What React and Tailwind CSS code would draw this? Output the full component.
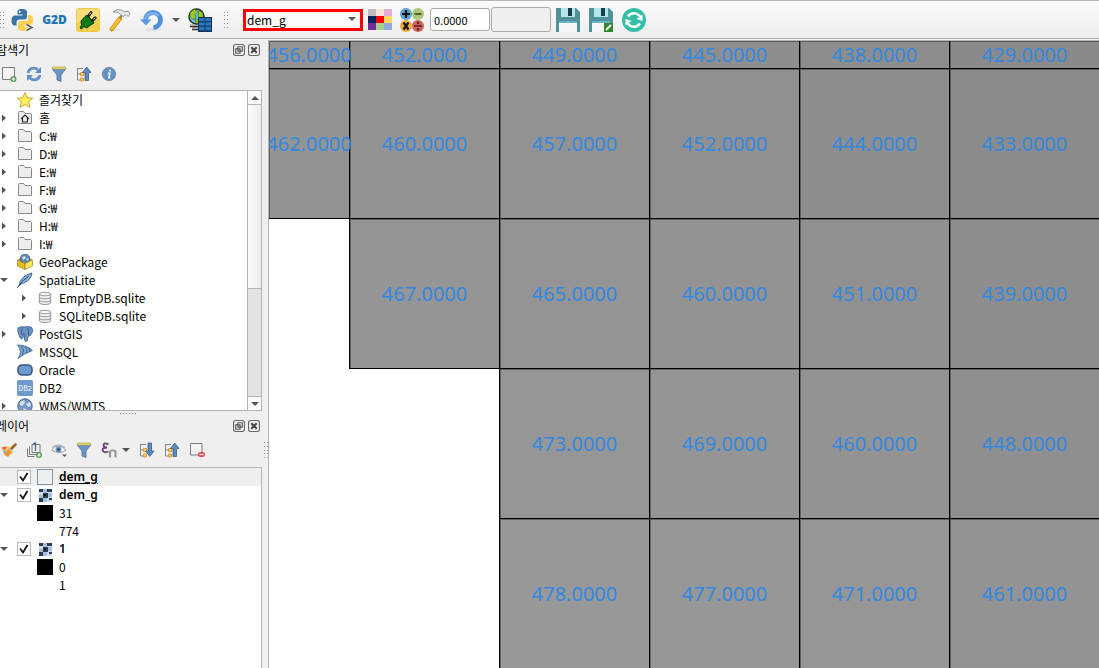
import React from "react";

/* ---------- toolbar icons ---------- */
const PythonIcon = () => (
  <svg viewBox="0 0 24 24" className="size-6">
    <path d="M11 1c-4 0-4.500 1.500-4.500 3v2.500h5v1H4c-2 0-3.500 1.500-3.500 5s1.500 5 3 5h2v-3c0-1.800 1.500-3 3-3h5c1.500 0 2.500-1.200 2.500-2.700V4c0-2-1.500-3-5-3z" fill="#3a73a6" />
    <circle cx="8.700" cy="3.800" r="1" fill="#fff" />
    <path d="M17 7h2c2 0 3 2 3 5 0 3.500-1 5-3 5h-6.500v1H17v2c0 1.800-1.500 3-5 3s-5-1-5-3v-4c0-1.800 1-3 3-3h4.500c1.500 0 2.500-1.200 2.500-2.700z" fill="#fcd04e" />
    <path d="M15 17l6 2.500-6 3" fill="none" stroke="#fff" strokeWidth="3" />
    <path d="M15.500 16.500l5.500 3-5.500 3" fill="none" stroke="#555" strokeWidth="1.500" />
  </svg>
);
const PlugIcon = () => (
  <svg viewBox="0 0 24 24" className="size-6">
    <rect x="0.500" y="0.500" width="23" height="23" rx="2.500" fill="#f2d04e" stroke="#ecc94a" />
    <path d="M1 1h22v10Q12 9 1 15z" fill="#f6dc7a" />
    <path d="M4 20l1.500-3-.500-4 4-4.500 2-1.500 2 2 4 4 1 2-4 2.500-3 2.500-3-1.500-2.500 2.500z" fill="#0b7a16" stroke="#123b12" strokeWidth="1" />
    <path d="M12.500 8l2.500-3.500M16.500 12.500l2.700-2.700" stroke="#222" strokeWidth="3" strokeLinecap="round" />
    <path d="M13.500 6.500l1.300-2M17.500 11.500l1.800-1.800" stroke="#ddd" strokeWidth="1" />
  </svg>
);
const HammerIcon = () => (
  <svg viewBox="0 0 24 24" className="size-6">
    <path d="M3 22q8 2 10-1z" fill="#d8d8d8" />
    <path d="M14 7L11 12" stroke="#8a8a8a" strokeWidth="2.500" />
    <path d="M11.500 11L4 21" stroke="#c78b10" strokeWidth="4.500" strokeLinecap="round" />
    <path d="M11 11.500L4 20.500" stroke="#f9bd2c" strokeWidth="3" strokeLinecap="round" />
    <path d="M5 4q4-3.500 8-2l4 2 3-1 2 3-2 2.500-2-2-3 2-3-3q-2-2-7-1.500z" fill="#e9ecec" stroke="#85898a" strokeWidth="0.900" />
  </svg>
);
const UndoIcon = () => (
  <svg viewBox="0 0 24 24" className="size-6">
    <ellipse cx="13" cy="21.500" rx="8" ry="1.800" fill="#dde1e8" />
    <path d="M5.500 12a7.500 7.500 0 1 1 8 7.500" fill="none" stroke="#4f8edb" strokeWidth="4.800" />
    <path d="M5.500 11a7.500 7.500 0 0 1 13-3" fill="none" stroke="#78b0ee" strokeWidth="3" />
    <path d="M0 11.500h11.500l-5.500 6z" fill="#5e9ae0" />
  </svg>
);
const GlobeServerIcon = () => (
  <svg viewBox="0 0 24 24" className="size-6">
    <circle cx="8.500" cy="8.500" r="7.500" fill="#69c6e8" stroke="#26331c" strokeWidth="1.500" />
    <path d="M2 5q2-3.500 5-3.500l3 2-3 3 1 3-3 2-3-3zM11 2.500l4 2.500v5l-3 1-2-3zM7 11l4 1-1 3.500H8z" fill="#9ccc22" stroke="#35541a" strokeWidth="0.600" />
    <path d="M2 18h8M4 21h7" stroke="#333" strokeWidth="2.500" />
    <path d="M2 17.500h8M4 20.500h7" stroke="#aaa" />
    <rect x="10.500" y="9.500" width="13" height="14" fill="#184b80" stroke="#16304e" />
    <path d="M11 11.500h12M11 16h12M11 20.500h12" stroke="#2b7cc6" strokeWidth="2.500" />
    <path d="M17 9v15" stroke="#153c68" strokeWidth="0.800" />
  </svg>
);
const PaletteIcon = () => (
  <svg viewBox="0 0 24 21" className="h-[21px] w-6" shapeRendering="crispEdges">
    {[
      ["#bfbfbf", "#fbe3d6", "#e2abd8"],
      ["#02215f", "#fe0000", "#fed65f"],
      ["#722d9c", "#a6cf8a", "#8faadc"],
    ].map((r, y) => r.map((c, x) => <rect key={c} x={x * 8} y={y * 7} width="8" height="7" fill={c} />))}
  </svg>
);
const CalcIcon = () => (
  <svg viewBox="0 0 24 24" className="size-6">
    <circle cx="6" cy="6" r="6" fill="#5ba3d0" />
    <circle cx="18" cy="6" r="6" fill="#adc978" />
    <circle cx="6" cy="18" r="6" fill="#f3ab3c" />
    <circle cx="18" cy="18" r="6" fill="#d2625e" />
    <path d="M2 6h8M6 2v8M3.500 14.500l5 7M8.500 14.500l-5 7" stroke="#111" strokeWidth="2.200" />
    <path d="M14.500 6h7" stroke="#47552c" strokeWidth="1.800" />
    <path d="M14 18h8" stroke="#552020" strokeWidth="1.500" />
    <circle cx="18" cy="14.800" r="1.200" fill="#552020" />
    <circle cx="18" cy="21.200" r="1.200" fill="#552020" />
  </svg>
);
const SaveIcon = ({ edit }) => (
  <svg viewBox="0 0 24 24" className="size-6">
    <path d="M0 0h20l4 4v20H0z" fill="#519199" />
    <path d="M5 0h14v9H5z" fill="#b3e5ea" />
    <path d="M12 0h4v8h-4z" fill="#173f49" />
    <path d="M3 13h18v3H3z" fill="#69b4c4" />
    <path d="M3 15h18v9H3z" fill="#f7f7f7" />
    {edit && <path d="M15 15h9v9h-9z" fill="#33862f" />}
    {edit && <path d="M17 22l5-5" stroke="#fff" strokeWidth="2" />}
  </svg>
);
const RefreshIcon = () => (
  <svg viewBox="0 0 24 24" className="size-6">
    <circle cx="12" cy="12" r="12" fill="#34bfa6" />
    <path d="M6 8.500a7.200 7.200 0 0 1 12.500 1M18 15.500a7.200 7.200 0 0 1-12.500-1" fill="none" stroke="#fff" strokeWidth="2.400" />
    <path d="M20.500 6.500v6.500l-6-2zM3.500 17.500V11l6 2z" fill="#fff" />
  </svg>
);

/* ---------- panel icons ---------- */
const S = ({ children, className = "size-4" }) => (
  <svg viewBox="0 0 16 16" className={className}>{children}</svg>
);
const AddLayer = () => (
  <S>
    <path d="M1.500 1.500h12v12h-12z" fill="#f2f2f2" stroke="#7d7d7d" />
    <circle cx="12.500" cy="13" r="3" fill="#5b9a61" />
    <path d="M10.800 13h3.400M12.500 11.300v3.400" stroke="#fff" strokeWidth="1.200" />
  </S>
);
const Reload = () => (
  <S>
    <path d="M2 7a5.800 5.800 0 0 1 10-3M14 9a5.800 5.800 0 0 1-10 3" fill="none" stroke="#6493c6" strokeWidth="2.800" />
    <path d="M15 1v6H9zM1 15V9h6z" fill="#5e8dc2" />
  </S>
);
const Funnel = () => (
  <S>
    <path d="M1 2.500h14L10 9v6.500l-4-1.500V9z" fill="#6b95c4" stroke="#486d98" strokeWidth="0.800" />
    <path d="M1.500 1h13v2h-13z" fill="#f5e34f" stroke="#a9a05c" strokeWidth="0.700" />
  </S>
);
const Tree = ({ down }) => (
  <S>
    <path d="M1.500 2v12h4M1.500 8h4M1 2.500h6" fill="none" stroke="#888" />
    <path d="M4.500 6.500h3v3h-3zM4.500 12h3v3h-3z" fill="#fbd06f" stroke="#e2992e" />
    <path d={down ? "M9 1h3.500v8H15l-4.200 5.500L6.500 9H9z" : "M9 14.500h3.500v-8H15l-4.200-5.500L6.500 6.500H9z"} fill="#5b8abd" stroke="#3c6187" strokeWidth="0.800" />
  </S>
);
const Info = () => (
  <S>
    <circle cx="8" cy="8" r="6.700" fill="#6492c6" stroke="#7f93a9" />
    <path d="M9 3.800v1.600M7 7.200h1.800l-1 4.500h1.500" fill="none" stroke="#fff" strokeWidth="1.600" />
  </S>
);
const Brush = () => (
  <S>
    <path d="M0.500 5.500l7-1.500 3.500 4-3 6-5-2z" fill="#f6d060" />
    <path d="M0.500 5.500l5-1-1.500 4z" fill="#ea5b50" />
    <path d="M1.500 8.500l4 1-1.500 3z" fill="#77a8e0" />
    <path d="M14.500 2.500L9.500 7.500" stroke="#9b6423" strokeWidth="2.500" strokeLinecap="round" />
    <path d="M7.500 6.500l4 3.500-4.500 5-4-2.500z" fill="#ee952f" />
    <path d="M7.500 6l4.500 4" stroke="#c9c9c9" strokeWidth="1.500" />
  </S>
);
const AddGroup = () => (
  <S>
    <path d="M1.500 6.500v8h7M3.500 4.500v8h8M6 2.500h8v8H6z" fill="none" stroke="#777" />
    <path d="M9.500 9V1q-2 0-2 2" fill="none" stroke="#476c94" strokeWidth="1.300" />
    <circle cx="13" cy="13" r="3" fill="#5b9a61" />
    <path d="M11.300 13h3.400M13 11.300v3.400" stroke="#fff" strokeWidth="1.200" />
  </S>
);
const Eye = () => (
  <S>
    <path d="M0.500 8Q7 0 15 8 8 13 0.500 8z" fill="#fff" stroke="#999" />
    <path d="M1 5.500Q7 0.500 14 5.500" fill="none" stroke="#aaa" />
    <circle cx="7.500" cy="7.500" r="3" fill="#6895ca" />
    <circle cx="7.500" cy="7.500" r="1.300" fill="#263f5d" />
    <path d="M11 12.500h5L13.500 15z" fill="#555" />
  </S>
);
const Expr = () => (
  <S>
    <path d="M7.500 2.500Q2.500 0 2.500 3.500q0 2 3.500 2-4.500 0-4.500 2.500 1 3.500 6 1.500" fill="none" stroke="#74427a" strokeWidth="1.800" />
    <path d="M9 15.500V10q0-1.500 1.500-1.500h2.500q1.500 0 1.500 1.500v5.500" fill="none" stroke="#999" strokeWidth="2.200" />
  </S>
);
const RemoveLayer = () => (
  <S>
    <path d="M1.500 1.500h11.500v11.500H1.500z" fill="#f2f2f2" stroke="#7d7d7d" />
    <rect x="9" y="10" width="7" height="5" rx="2.500" fill="#e4474d" />
    <path d="M10.500 12.500h4" stroke="#fff" strokeWidth="1.300" />
  </S>
);
const Star = () => (
  <S><path d="M8 0.500l2.300 5.200 5.400.500-4 3.700 1.200 5.400L8 12.500l-4.900 2.800 1.200-5.400-4-3.700 5.400-.500z" fill="#fbef5c" stroke="#c39d29" strokeWidth="0.900" /></S>
);
const Folder = ({ home }) => (
  <S>
    <path d="M1.500 2.500q0-1 1-1h4l1.500 2h5.500q1 0 1 1v9h-13z" fill="#ededed" stroke="#888" />
    {home && <path d="M4 9l4-4 4 4M5.500 8v4h5V8" fill="none" stroke="#222" strokeWidth="1.100" />}
  </S>
);
const GeoPackage = () => (
  <S>
    <path d="M0.500 5.500L8 2l7.500 3.500L8 9.500z" fill="#b99a1c" />
    <circle cx="8" cy="5" r="4.800" fill="#5f86b0" stroke="#375779" strokeWidth="0.800" />
    <path d="M5 3l3-1 1 2-3 2zM9 5l3-1-1 3z" fill="#d6e2ee" />
    <path d="M0.500 6L8 9.500v6L0.500 12z" fill="#e7bd19" stroke="#8d7416" strokeWidth="0.600" />
    <path d="M15.500 6L8 9.500v6l7.500-3.500z" fill="#fae65a" stroke="#8d7416" strokeWidth="0.600" />
  </S>
);
const Feather = () => (
  <S>
    <path d="M2 14Q3 4 15 1q-1 8-11 11z" fill="#8cb2de" stroke="#40658c" />
    <path d="M0.500 15.500Q4 9 12 4" fill="none" stroke="#345374" />
  </S>
);
const Db = () => (
  <S className="h-4 w-[14px]">
    <path d="M1.500 3.500v10c0 2.500 13 2.500 13 0v-10" fill="#f1f1f1" stroke="#888" />
    <ellipse cx="8" cy="3.500" rx="6.500" ry="2" fill="#f7f7f7" stroke="#888" />
    <path d="M1.500 7c0 2.500 13 2.500 13 0M1.500 10.500c0 2.500 13 2.500 13 0" fill="none" stroke="#888" />
  </S>
);
const Elephant = () => (
  <S>
    <path d="M1 2q3-2 6-1 4-1 7 0 3 2 1 6l-2 3h-2l-.500 4.500q-2 2-3 0V10q-2 1-2.500 3-2 0-3-4Q0 5 1 2z" fill="#6893c4" stroke="#3a5e86" strokeWidth="0.800" />
    <path d="M5 2q-1 4 0 7M10.500 2q2 3 1 7M7 7v3" fill="none" stroke="#345679" strokeWidth="0.900" />
  </S>
);
const Mssql = () => (
  <S>
    <path d="M0.500 1Q10 1 15.500 6.500 8 9 1 14.500 6 7 0.500 1z" fill="#7ba5d4" stroke="#41658d" strokeWidth="0.800" />
    <path d="M4.500 1.500q3.500 4 1 10M8.500 2.500q2.500 3 1 7M12 4q1.500 2 .500 4" fill="none" stroke="#41658d" />
  </S>
);
const Oracle = () => (
  <S><rect x="1" y="3" width="14" height="10" rx="4" fill="#6d9bd0" stroke="#385a80" strokeWidth="1.600" /></S>
);
const Wms = () => (
  <S>
    <circle cx="8" cy="8" r="7.200" fill="#7399c4" stroke="#42658c" />
    <path d="M3 4l4-2 1 3-3 3-2-1zM9 6l4-2 1 4-3 1zM6 10l3 1-1 3z" fill="#d4e2f0" />
  </S>
);
const Db2 = () => (
  <span className="flex size-4 items-center justify-center rounded-[2px] bg-[#6e9acb] text-[7px] leading-none text-white">DB2</span>
);
const Raster = () => (
  <svg viewBox="0 0 13 13" className="mx-px h-[13px] w-[14px]" shapeRendering="crispEdges">
    <path d="M0 0h13v13H0z" fill="#cfdcec" />
    <path d="M0 0h4v3H0zM8 0h5v3H8zM4 4h5v5H4zM0 9h4v4H0zM10 9h3v2h-3z" fill="#2c3d51" />
    <path d="M4 0h4v4H4zM9 4h4v4H9zM4 9h4v4H4zM0 6h4v3H0z" fill="#a6bfdc" />
    <path d="M5 5h2v2H5z" fill="#111" />
  </svg>
);

/* ---------- small parts ---------- */
const Caret = ({ dir }) => (
  <svg viewBox="0 0 8 8" className="size-2 shrink-0">
    <path
      d={dir === "right" ? "M2 0.500v7L6 4z" : dir === "up" ? "M0 6h8L4 2z" : "M0 2h8L4 6z"}
      fill="#555"
    />
  </svg>
);
const Grip = () => (
  <span className="flex h-4 w-1 flex-col justify-between">
    {[0, 1, 2, 3, 4].map((i) => (
      <span key={i} className="flex justify-between">
        <i className="size-px bg-[#999]" />
        <i className="size-px bg-[#999]" />
      </span>
    ))}
  </span>
);
const Tool = ({ label, children, className = "" }) => (
  <button type="button" aria-label={label} className={`flex shrink-0 items-center justify-center ${className}`}>
    {children}
  </button>
);
const PanelTitle = ({ title }) => (
  <div className="flex h-[19px] shrink-0 items-center justify-between pr-2">
    <h2 className="-ml-1 font-normal">{title}</h2>
    <div className="flex gap-[3px]">
      <Tool label="Float">
        <svg viewBox="0 0 11 11" className="size-3">
          <rect x="0.500" y="0.500" width="10" height="10" rx="2" fill="none" stroke="#666" />
          <path d="M4.500 2.500h4v4h-4zM2.500 4.500h4v4h-4z" fill="#eee" stroke="#555" />
        </svg>
      </Tool>
      <Tool label="Close">
        <svg viewBox="0 0 11 11" className="size-3">
          <rect x="0.500" y="0.500" width="10" height="10" rx="2" fill="none" stroke="#666" />
          <path d="M3 3l5 5M8 3L3 8" stroke="#444" strokeWidth="2" />
        </svg>
      </Tool>
    </div>
  </div>
);

const browser = [
  ["즐겨찾기", Star, ""],
  ["홈", () => <Folder home />, "right"],
  ...["C", "D", "E", "F", "G", "H", "I"].map((d) => [`${d}:₩`, Folder, "right"]),
  ["GeoPackage", GeoPackage, ""],
  ["SpatiaLite", Feather, "down"],
  ["EmptyDB.sqlite", Db, "right", true],
  ["SQLiteDB.sqlite", Db, "right", true],
  ["PostGIS", Elephant, "right"],
  ["MSSQL", Mssql, ""],
  ["Oracle", Oracle, ""],
  ["DB2", Db2, ""],
  ["WMS/WMTS", Wms, "right"],
];

const Layer = ({ id, name, active, children }) => (
  <li className={`flex h-[18px] items-center ${active ? "bg-[#efefef]" : ""}`}>
    <span className="flex w-[17px] shrink-0">{!active && <Caret dir="down" />}</span>
    <span className="relative mr-[6px] size-[14px] shrink-0">
      <input id={id} type="checkbox" defaultChecked className="peer block size-[14px] appearance-none border border-[#b9b9b9] bg-white" />
      <svg viewBox="0 0 14 14" className="pointer-events-none absolute inset-0 hidden size-[14px] peer-checked:block">
        <path d="M3 6.500l3 4 4.500-7.500" fill="none" stroke="#111" strokeWidth="1.800" />
      </svg>
    </span>
    {children}
    <label htmlFor={id} className={`ml-[6px] font-['Noto_Sans','Noto_Sans_CJK_KR',sans-serif] font-semibold ${active ? "underline underline-offset-2" : ""}`}>{name}</label>
  </li>
);
const Legend = ({ value, swatch }) => (
  <li className="flex h-[18px] items-center pl-[37px]">
    <span className={`mr-[6px] size-4 ${swatch ? "bg-black" : ""}`} />
    {value}
  </li>
);

/* ---------- map ---------- */
const rows = [
  [456, 452, 449, 445, 438, 429],
  [462, 460, 457, 452, 444, 433],
  [null, 467, 465, 460, 451, 439],
  [null, null, 473, 469, 460, 448],
  [null, null, 478, 477, 471, 461],
];
const shade = (v) => {
  const g = Math.round(138 + (v - 429) * 0.28);
  return `rgb(${g},${g},${g})`;
};
const Cell = ({ value, edge }) =>
  value === null ? (
    <div className={edge ? "border-r border-black" : ""} />
  ) : (
    <div
      className="flex items-center justify-center border-r border-b border-black shadow-[inset_1px_1px_0_rgba(0,0,0,0.35)]"
      style={{ backgroundColor: shade(value) }}
    >
      <span className="relative z-10 font-['Noto_Sans',sans-serif] text-xl leading-6 whitespace-nowrap text-[#3388e0]">{value}.0000</span>
    </div>
  );

export default function App() {
  return (
    <div className="flex h-screen flex-col overflow-hidden bg-[#efefef] font-['Noto_Sans_CJK_KR','Noto_Sans',sans-serif] text-xs leading-4 text-black">
      <header className="flex h-[39px] shrink-0 items-center border-t border-b border-[#b4b4b4] bg-linear-to-b from-[#fbfbfb] to-[#ededed]">
        <Grip />
        <Tool label="Python" className="ml-[7px]"><PythonIcon /></Tool>
        <Tool label="G2D" className="ml-1.5 w-[27px] font-['Open_Sans','Noto_Sans',sans-serif] text-xs font-extrabold text-[#1f74b5]">G2D</Tool>
        <Tool label="Plugins" className="ml-2"><PlugIcon /></Tool>
        <Tool label="Build" className="ml-2"><HammerIcon /></Tool>
        <Tool label="Undo" className="ml-2"><UndoIcon /></Tool>
        <Tool label="Undo options" className="ml-2"><Caret dir="down" /></Tool>
        <Tool label="Web services" className="ml-2"><GlobeServerIcon /></Tool>
        <span className="ml-3"><Grip /></span>
        <label className="relative ml-[15px] flex">
          <select aria-label="Layer" className="h-[22px] w-[120px] appearance-none border-3 border-[#f00] bg-[#fafafa] pl-px text-xs leading-4">
            <option>dem_g</option>
          </select>
          <span className="pointer-events-none absolute top-[6px] right-[7px]"><Caret dir="down" /></span>
        </label>
        <Tool label="Palette" className="ml-[5px]"><PaletteIcon /></Tool>
        <Tool label="Raster calculator" className="ml-2"><CalcIcon /></Tool>
        <input aria-label="Value" defaultValue="0.0000" className="ml-[6px] h-[23px] w-[60px] rounded-[3px] border border-[#aaa] bg-white px-[3px] text-[11px]" />
        <input aria-label="Result" readOnly className="ml-px h-[25px] w-[60px] rounded-[3px] border border-[#aaa] bg-[#efefef] px-1" />
        <Tool label="Save" className="ml-[5px]"><SaveIcon /></Tool>
        <Tool label="Save edits" className="ml-[9px]"><SaveIcon edit /></Tool>
        <Tool label="Refresh" className="ml-[9px]"><RefreshIcon /></Tool>
      </header>

      <div className="flex min-h-0 flex-1 pt-px">
        <aside className="flex w-[268px] shrink-0 flex-col overflow-hidden">
          <section className="shrink-0">
            <PanelTitle title="탐색기" />
            <div className="flex h-[31px] items-center gap-[9px] pl-px pb-0.5">
              <Tool label="Add layer"><AddLayer /></Tool>
              <Tool label="Reload"><Reload /></Tool>
              <Tool label="Filter"><Funnel /></Tool>
              <Tool label="Collapse all"><Tree /></Tool>
              <Tool label="Properties"><Info /></Tool>
            </div>
            <div className="mr-[6px] flex h-[321px] border-y border-r border-[#b4b4b4] bg-white">
              <ul className="flex-1 overflow-hidden">
                {browser.map(([name, Icon, dir, child]) => (
                  <li key={name} className={`flex h-[18px] items-center ${child ? "pl-5" : ""}`}>
                    <span className="flex w-[17px] shrink-0">{dir && <Caret dir={dir} />}</span>
                    <span className="mr-[6px] flex w-4 shrink-0 justify-center"><Icon /></span>
                    {name}
                  </li>
                ))}
              </ul>
              <div className="flex w-[14px] flex-col border-l border-[#b4b4b4] bg-[#e3e3e3]">
                <Tool label="Scroll up" className="h-[14px] border-b border-[#b4b4b4] bg-[#fafafa]"><Caret dir="up" /></Tool>
                <span className="h-[184px] border-b border-[#b4b4b4] bg-linear-to-r from-[#fcfcfc] to-[#ececec]" />
                <span className="flex-1" />
                <Tool label="Scroll down" className="h-[14px] border-t border-[#b4b4b4] bg-[#fafafa]"><Caret dir="down" /></Tool>
              </div>
            </div>
          </section>

          <div className="flex h-[5px] shrink-0 items-center justify-center gap-0.5 pr-3">
            {[0, 1, 2, 3, 4, 5].map((i) => <i key={i} className="size-px bg-[#999]" />)}
          </div>

          <section className="flex min-h-0 flex-1 flex-col">
            <PanelTitle title="레이어" />
            <div className="flex h-8 shrink-0 items-center gap-[9px] pl-px pb-0.5">
              <Tool label="Layer styling"><Brush /></Tool>
              <Tool label="Add group"><AddGroup /></Tool>
              <Tool label="Map themes"><Eye /></Tool>
              <Tool label="Filter legend"><Funnel /></Tool>
              <Tool label="Filter by expression"><Expr /></Tool>
              <Tool label="Expression options" className="-ml-1"><Caret dir="down" /></Tool>
              <Tool label="Expand all"><Tree down /></Tool>
              <Tool label="Collapse all"><Tree /></Tool>
              <Tool label="Remove layer"><RemoveLayer /></Tool>
              <span className="ml-auto"><Grip /></span>
            </div>
            <ul className="mr-[6px] flex-1 border-t border-r border-[#b4b4b4] bg-white">
              <Layer id="layer-vector" name="dem_g" active>
                <span className="size-4 border border-[#8194a8] bg-[#eef0f0]" />
              </Layer>
              <Layer id="layer-dem" name="dem_g"><Raster /></Layer>
              <Legend value="31" swatch />
              <Legend value="774" />
              <Layer id="layer-one" name="1"><Raster /></Layer>
              <Legend value="0" swatch />
              <Legend value="1" />
            </ul>
          </section>
        </aside>

        <main className="min-w-0 flex-1 overflow-hidden border-t border-l border-[#b4b4b4] bg-white">
          <div className="grid grid-cols-[81px_repeat(5,150px)] grid-rows-[28px_repeat(4,150px)]">
            {rows.map((r, y) =>
              r.map((v, x) => <Cell key={`${y}-${x}`} value={v} edge={v === null && r[x + 1] !== null} />)
            )}
          </div>
        </main>
      </div>
    </div>
  );
}
